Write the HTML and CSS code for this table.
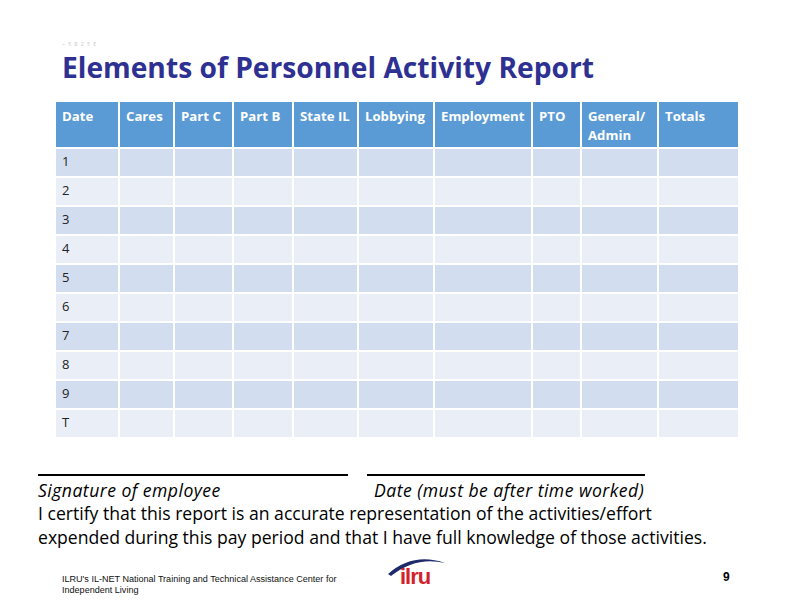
FILE: index.html
```html
<!DOCTYPE html>
<html>
<head>
<meta charset="utf-8">
<link rel="stylesheet" href="styles.css">
</head>
<body>
<div class="page">
  <div class="tiny">~ 5 B 2 5 E</div>
  <h1 class="title">Elements of Personnel Activity Report</h1>
  <div class="grid">
    <div class="h">Date</div><div class="h">Cares</div><div class="h">Part C</div><div class="h">Part B</div><div class="h">State IL</div><div class="h">Lobbying</div><div class="h">Employment</div><div class="h">PTO</div><div class="h">General/<br>Admin</div><div class="h">Totals</div>
    <div class="c o">1</div><div class="c o"></div><div class="c o"></div><div class="c o"></div><div class="c o"></div><div class="c o"></div><div class="c o"></div><div class="c o"></div><div class="c o"></div><div class="c o"></div>
    <div class="c e">2</div><div class="c e"></div><div class="c e"></div><div class="c e"></div><div class="c e"></div><div class="c e"></div><div class="c e"></div><div class="c e"></div><div class="c e"></div><div class="c e"></div>
    <div class="c o">3</div><div class="c o"></div><div class="c o"></div><div class="c o"></div><div class="c o"></div><div class="c o"></div><div class="c o"></div><div class="c o"></div><div class="c o"></div><div class="c o"></div>
    <div class="c e">4</div><div class="c e"></div><div class="c e"></div><div class="c e"></div><div class="c e"></div><div class="c e"></div><div class="c e"></div><div class="c e"></div><div class="c e"></div><div class="c e"></div>
    <div class="c o">5</div><div class="c o"></div><div class="c o"></div><div class="c o"></div><div class="c o"></div><div class="c o"></div><div class="c o"></div><div class="c o"></div><div class="c o"></div><div class="c o"></div>
    <div class="c e">6</div><div class="c e"></div><div class="c e"></div><div class="c e"></div><div class="c e"></div><div class="c e"></div><div class="c e"></div><div class="c e"></div><div class="c e"></div><div class="c e"></div>
    <div class="c o">7</div><div class="c o"></div><div class="c o"></div><div class="c o"></div><div class="c o"></div><div class="c o"></div><div class="c o"></div><div class="c o"></div><div class="c o"></div><div class="c o"></div>
    <div class="c e">8</div><div class="c e"></div><div class="c e"></div><div class="c e"></div><div class="c e"></div><div class="c e"></div><div class="c e"></div><div class="c e"></div><div class="c e"></div><div class="c e"></div>
    <div class="c o">9</div><div class="c o"></div><div class="c o"></div><div class="c o"></div><div class="c o"></div><div class="c o"></div><div class="c o"></div><div class="c o"></div><div class="c o"></div><div class="c o"></div>
    <div class="c e">T</div><div class="c e"></div><div class="c e"></div><div class="c e"></div><div class="c e"></div><div class="c e"></div><div class="c e"></div><div class="c e"></div><div class="c e"></div><div class="c e"></div>
  </div>
  <div class="sigs">
    <div class="sig sig1"><div class="line"></div><div class="label">Signature of employee</div></div>
    <div class="sig sig2"><div class="line"></div><div class="label">Date (must be after time worked)</div></div>
  </div>
  <p class="certify">I certify that this report is an accurate representation of the activities/effort<br>expended during this pay period and that I have full knowledge of those activities.</p>
  <div class="footer">
    <div class="foottext">ILRU's IL-NET National Training and Technical Assistance Center for<br>Independent Living</div>
    <div class="logo">
      <svg class="swoosh" width="66" height="24" viewBox="0 0 66 24"><path d="M5 19 Q 30 -3 62 8 Q 33 1 8 21 Z" fill="#1f2a6b"/></svg>
      <span class="ilru">ilru</span>
    </div>
    <div class="pagenum">9</div>
  </div>
</div>
</body>
</html>
```
FILE: styles.css
```css
html, body { margin: 0; padding: 0; background: #fff; }
body { font-family: "Open Sans", Lato, sans-serif; color: #000; }
.page { width: 792px; height: 612px; box-sizing: border-box; }
.tiny { font-size: 5px; color: #c8c8c8; margin: 0 0 0 62px; padding-top: 42px; height: 5px; letter-spacing: 1px; line-height: 5px; }
.title { margin: 5px 0 0 62px; font-size: 28.2px; font-weight: 700; color: #2e3192; line-height: 30px; height: 50px; letter-spacing: 0; }
.grid { margin-left: 56px; display: grid; grid-template-columns: 62px 53px 57px 58px 63px 74px 96px 47px 75px 79px; grid-template-rows: 45px repeat(10, 27px); gap: 2px; width: 682px; }
.h { background: #5b9bd5; color: #fff; font-weight: 700; font-size: 13.2px; padding: 5px 0 0 6px; line-height: 19px; white-space: nowrap; }
.c { font-size: 13px; padding: 3px 0 0 6px; line-height: 19px; color: #222; }
.o { background: #d2deef; }
.e { background: #eaeff7; }
.sigs { display: flex; margin: 37px 0 0 38px; gap: 19px; }
.sig .line { height: 2px; background: #000; }
.sig1 { width: 310px; }
.sig2 { width: 278px; }
.label { font-style: italic; font-size: 17.6px; letter-spacing: 0.47px; line-height: 24px; margin-top: 2px; white-space: nowrap; }
.sig2 .label { padding-left: 7px; }
.certify { margin: -1px 0 0 38px; font-size: 17.6px; line-height: 24px; white-space: nowrap; }
.footer { display: flex; align-items: flex-start; margin-top: 16px; height: 40px; }
.foottext { font-family: "Liberation Sans", Arial, sans-serif; font-size: 9.05px; line-height: 11px; color: #111; margin: 9px 0 0 62px; width: 321px; }
.logo { position: relative; width: 66px; height: 32px; margin-top: -10px; }
.swoosh { position: absolute; left: 0; top: 0; }
.ilru { position: absolute; left: 17px; top: 10px; font-family: "Liberation Sans", Arial, sans-serif; font-weight: 700; font-size: 22px; line-height: 24px; color: #d2232a; letter-spacing: -1px; }
.pagenum { font-family: "Liberation Sans", Arial, sans-serif; font-weight: 700; font-size: 12px; margin: 5px 0 0 274px; }
```
